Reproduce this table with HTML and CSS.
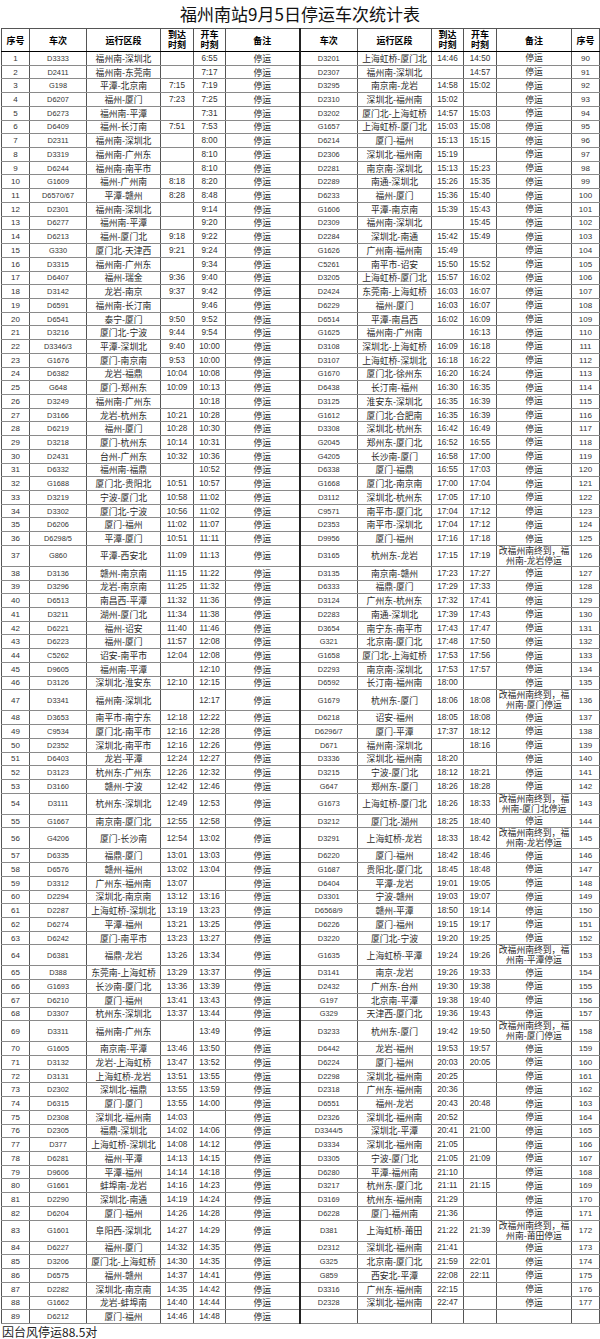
FILE: index.html
```html
<!DOCTYPE html>
<html lang="zh-CN">
<head>
<meta charset="utf-8">
<title>福州南站9月5日停运车次统计表</title>
<link rel="stylesheet" href="styles.css">
</head>
<body>
<div class="sheet">
<h1 class="title">福州南站9月5日停运车次统计表</h1>
<table class="grid">
<colgroup>
<col style="width:28px"><col style="width:57px"><col style="width:74px"><col style="width:33px"><col style="width:32px"><col style="width:74px">
<col style="width:58px"><col style="width:74px"><col style="width:32px"><col style="width:33px"><col style="width:75px"><col style="width:28px">
</colgroup>
<thead>
<tr class="head"><th>序号</th><th>车次</th><th>运行区段</th><th><span class="hl">到达</span><span class="hl">时刻</span></th><th><span class="hl">开车</span><span class="hl">时刻</span></th><th>备注</th><th>车次</th><th>运行区段</th><th><span class="hl">到达</span><span class="hl">时刻</span></th><th><span class="hl">开车</span><span class="hl">时刻</span></th><th>备注</th><th>序号</th></tr>
</thead>
<tbody>
<tr><td>1</td><td>D3333</td><td>福州南-深圳北</td><td></td><td>6:55</td><td>停运</td><td>D3201</td><td>上海虹桥-厦门北</td><td>14:46</td><td>14:50</td><td>停运</td><td>90</td></tr>
<tr><td>2</td><td>D2411</td><td>福州南-东莞南</td><td></td><td>7:17</td><td>停运</td><td>D2307</td><td>福州南-深圳北</td><td></td><td>14:57</td><td>停运</td><td>91</td></tr>
<tr><td>3</td><td>G198</td><td>平潭-北京南</td><td>7:15</td><td>7:19</td><td>停运</td><td>D3295</td><td>南京南-龙岩</td><td>14:58</td><td>15:02</td><td>停运</td><td>92</td></tr>
<tr><td>4</td><td>D6207</td><td>福州-厦门</td><td>7:23</td><td>7:25</td><td>停运</td><td>D2310</td><td>深圳北-福州南</td><td>15:02</td><td></td><td>停运</td><td>93</td></tr>
<tr><td>5</td><td>D6273</td><td>福州南-平潭</td><td></td><td>7:31</td><td>停运</td><td>D3202</td><td>厦门北-上海虹桥</td><td>14:57</td><td>15:03</td><td>停运</td><td>94</td></tr>
<tr><td>6</td><td>D6409</td><td>福州-长汀南</td><td>7:51</td><td>7:53</td><td>停运</td><td>G1657</td><td>上海虹桥-厦门北</td><td>15:03</td><td>15:08</td><td>停运</td><td>95</td></tr>
<tr><td>7</td><td>D2311</td><td>福州南-深圳北</td><td></td><td>8:00</td><td>停运</td><td>D6214</td><td>厦门-福州</td><td>15:13</td><td>15:15</td><td>停运</td><td>96</td></tr>
<tr><td>8</td><td>D3319</td><td>福州南-广州东</td><td></td><td>8:10</td><td>停运</td><td>D2306</td><td>深圳北-福州南</td><td>15:19</td><td></td><td>停运</td><td>97</td></tr>
<tr><td>9</td><td>D6244</td><td>福州南-南平市</td><td></td><td>8:10</td><td>停运</td><td>D2281</td><td>南京南-深圳北</td><td>15:13</td><td>15:23</td><td>停运</td><td>98</td></tr>
<tr><td>10</td><td>G1609</td><td>福州-广州南</td><td>8:18</td><td>8:20</td><td>停运</td><td>D2289</td><td>南通-深圳北</td><td>15:26</td><td>15:35</td><td>停运</td><td>99</td></tr>
<tr><td>11</td><td>D6570/67</td><td>平潭-赣州</td><td>8:28</td><td>8:48</td><td>停运</td><td>D6233</td><td>福州-厦门</td><td>15:36</td><td>15:40</td><td>停运</td><td>100</td></tr>
<tr><td>12</td><td>D2301</td><td>福州南-深圳北</td><td></td><td>9:14</td><td>停运</td><td>G1606</td><td>平潭-南京南</td><td>15:39</td><td>15:43</td><td>停运</td><td>101</td></tr>
<tr><td>13</td><td>D6277</td><td>福州南-平潭</td><td></td><td>9:20</td><td>停运</td><td>D2309</td><td>福州南-深圳北</td><td></td><td>15:45</td><td>停运</td><td>102</td></tr>
<tr><td>14</td><td>D6213</td><td>福州-厦门北</td><td>9:18</td><td>9:22</td><td>停运</td><td>D2284</td><td>深圳北-南通</td><td>15:42</td><td>15:49</td><td>停运</td><td>103</td></tr>
<tr><td>15</td><td>G330</td><td>厦门北-天津西</td><td>9:21</td><td>9:24</td><td>停运</td><td>G1626</td><td>广州南-福州南</td><td>15:49</td><td></td><td>停运</td><td>104</td></tr>
<tr><td>16</td><td>D3315</td><td>福州南-广州东</td><td></td><td>9:34</td><td>停运</td><td>C5261</td><td>南平市-诏安</td><td>15:50</td><td>15:52</td><td>停运</td><td>105</td></tr>
<tr><td>17</td><td>D6407</td><td>福州-瑞金</td><td>9:36</td><td>9:40</td><td>停运</td><td>D3205</td><td>上海虹桥-厦门北</td><td>15:57</td><td>16:02</td><td>停运</td><td>106</td></tr>
<tr><td>18</td><td>D3142</td><td>龙岩-南京</td><td>9:37</td><td>9:42</td><td>停运</td><td>D2424</td><td>东莞南-上海虹桥</td><td>16:03</td><td>16:07</td><td>停运</td><td>107</td></tr>
<tr><td>19</td><td>D6591</td><td>福州南-长汀南</td><td></td><td>9:46</td><td>停运</td><td>D6229</td><td>福州-厦门</td><td>16:03</td><td>16:07</td><td>停运</td><td>108</td></tr>
<tr><td>20</td><td>D6541</td><td>泰宁-厦门</td><td>9:50</td><td>9:52</td><td>停运</td><td>D6514</td><td>平潭-南昌西</td><td>16:02</td><td>16:09</td><td>停运</td><td>109</td></tr>
<tr><td>21</td><td>D3216</td><td>厦门北-宁波</td><td>9:44</td><td>9:54</td><td>停运</td><td>G1625</td><td>福州南-广州南</td><td></td><td>16:13</td><td>停运</td><td>110</td></tr>
<tr><td>22</td><td>D3346/3</td><td>平潭-深圳北</td><td>9:40</td><td>10:00</td><td>停运</td><td>D3108</td><td>深圳北-上海虹桥</td><td>16:09</td><td>16:18</td><td>停运</td><td>111</td></tr>
<tr><td>23</td><td>G1676</td><td>厦门-南京南</td><td>9:53</td><td>10:00</td><td>停运</td><td>D3107</td><td>上海虹桥-深圳北</td><td>16:18</td><td>16:22</td><td>停运</td><td>112</td></tr>
<tr><td>24</td><td>D6382</td><td>龙岩-福鼎</td><td>10:04</td><td>10:08</td><td>停运</td><td>G1670</td><td>厦门北-徐州东</td><td>16:20</td><td>16:24</td><td>停运</td><td>113</td></tr>
<tr><td>25</td><td>G648</td><td>厦门-郑州东</td><td>10:09</td><td>10:13</td><td>停运</td><td>D6438</td><td>长汀南-福州</td><td>16:30</td><td>16:35</td><td>停运</td><td>114</td></tr>
<tr><td>26</td><td>D3249</td><td>福州南-广州东</td><td></td><td>10:18</td><td>停运</td><td>D3125</td><td>淮安东-深圳北</td><td>16:35</td><td>16:39</td><td>停运</td><td>115</td></tr>
<tr><td>27</td><td>D3166</td><td>龙岩-杭州东</td><td>10:21</td><td>10:28</td><td>停运</td><td>G1612</td><td>厦门北-合肥南</td><td>16:35</td><td>16:39</td><td>停运</td><td>116</td></tr>
<tr><td>28</td><td>D6219</td><td>福州-厦门</td><td>10:28</td><td>10:30</td><td>停运</td><td>D3308</td><td>深圳北-杭州东</td><td>16:42</td><td>16:49</td><td>停运</td><td>117</td></tr>
<tr><td>29</td><td>D3218</td><td>厦门-杭州东</td><td>10:14</td><td>10:31</td><td>停运</td><td>G2045</td><td>郑州东-厦门北</td><td>16:52</td><td>16:55</td><td>停运</td><td>118</td></tr>
<tr><td>30</td><td>D2431</td><td>台州-广州东</td><td>10:32</td><td>10:36</td><td>停运</td><td>G4205</td><td>长沙南-厦门</td><td>16:58</td><td>17:00</td><td>停运</td><td>119</td></tr>
<tr><td>31</td><td>D6332</td><td>福州南-福鼎</td><td></td><td>10:52</td><td>停运</td><td>D6338</td><td>厦门-福鼎</td><td>16:55</td><td>17:03</td><td>停运</td><td>120</td></tr>
<tr><td>32</td><td>G1688</td><td>厦门北-贵阳北</td><td>10:51</td><td>10:57</td><td>停运</td><td>G1668</td><td>厦门北-南京南</td><td>17:00</td><td>17:04</td><td>停运</td><td>121</td></tr>
<tr><td>33</td><td>D3219</td><td>宁波-厦门北</td><td>10:58</td><td>11:02</td><td>停运</td><td>D3112</td><td>深圳北-杭州东</td><td>17:05</td><td>17:10</td><td>停运</td><td>122</td></tr>
<tr><td>34</td><td>D3302</td><td>厦门北-宁波</td><td>10:56</td><td>11:02</td><td>停运</td><td>C9571</td><td>南平市-厦门北</td><td>17:04</td><td>17:12</td><td>停运</td><td>123</td></tr>
<tr><td>35</td><td>D6206</td><td>厦门-福州</td><td>11:02</td><td>11:07</td><td>停运</td><td>D2353</td><td>南平市-深圳北</td><td>17:04</td><td>17:12</td><td>停运</td><td>124</td></tr>
<tr><td>36</td><td>D6298/5</td><td>平潭-厦门</td><td>10:51</td><td>11:11</td><td>停运</td><td>D9956</td><td>厦门-福州</td><td>17:16</td><td>17:18</td><td>停运</td><td>125</td></tr>
<tr class="tall"><td>37</td><td>G860</td><td>平潭-西安北</td><td>11:09</td><td>11:13</td><td>停运</td><td>D3165</td><td>杭州东-龙岩</td><td>17:15</td><td>17:19</td><td>改福州南终到，福州南-龙岩停运</td><td>126</td></tr>
<tr><td>38</td><td>D3136</td><td>赣州-南京南</td><td>11:15</td><td>11:22</td><td>停运</td><td>D3135</td><td>南京南-赣州</td><td>17:23</td><td>17:27</td><td>停运</td><td>127</td></tr>
<tr><td>39</td><td>D3296</td><td>龙岩-南京南</td><td>11:25</td><td>11:32</td><td>停运</td><td>D6333</td><td>福鼎-厦门</td><td>17:29</td><td>17:33</td><td>停运</td><td>128</td></tr>
<tr><td>40</td><td>D6513</td><td>南昌西-平潭</td><td>11:32</td><td>11:36</td><td>停运</td><td>D3124</td><td>广州东-杭州东</td><td>17:32</td><td>17:41</td><td>停运</td><td>129</td></tr>
<tr><td>41</td><td>D3211</td><td>湖州-厦门北</td><td>11:34</td><td>11:38</td><td>停运</td><td>D2283</td><td>南通-深圳北</td><td>17:39</td><td>17:43</td><td>停运</td><td>130</td></tr>
<tr><td>42</td><td>D6221</td><td>福州-诏安</td><td>11:40</td><td>11:46</td><td>停运</td><td>D3654</td><td>南宁东-南平市</td><td>17:43</td><td>17:47</td><td>停运</td><td>131</td></tr>
<tr><td>43</td><td>D6223</td><td>福州-厦门</td><td>11:57</td><td>12:08</td><td>停运</td><td>G321</td><td>北京南-厦门北</td><td>17:48</td><td>17:50</td><td>停运</td><td>132</td></tr>
<tr><td>44</td><td>C5262</td><td>诏安-南平市</td><td>12:04</td><td>12:08</td><td>停运</td><td>G1658</td><td>厦门北-上海虹桥</td><td>17:53</td><td>17:56</td><td>停运</td><td>133</td></tr>
<tr><td>45</td><td>D9605</td><td>福州南-平潭</td><td></td><td>12:10</td><td>停运</td><td>D2293</td><td>南京南-深圳北</td><td>17:53</td><td>17:57</td><td>停运</td><td>134</td></tr>
<tr><td>46</td><td>D3126</td><td>深圳北-淮安东</td><td>12:10</td><td>12:15</td><td>停运</td><td>D6592</td><td>长汀南-福州南</td><td>18:00</td><td></td><td>停运</td><td>135</td></tr>
<tr class="tall"><td>47</td><td>D3341</td><td>福州南-深圳北</td><td></td><td>12:17</td><td>停运</td><td>G1679</td><td>杭州东-厦门</td><td>18:06</td><td>18:08</td><td>改福州南终到，福州南-厦门停运</td><td>136</td></tr>
<tr><td>48</td><td>D3653</td><td>南平市-南宁东</td><td>12:18</td><td>12:22</td><td>停运</td><td>D6218</td><td>诏安-福州</td><td>18:05</td><td>18:08</td><td>停运</td><td>137</td></tr>
<tr><td>49</td><td>C9534</td><td>厦门北-南平市</td><td>12:16</td><td>12:28</td><td>停运</td><td>D6296/7</td><td>厦门-平潭</td><td>17:37</td><td>18:12</td><td>停运</td><td>138</td></tr>
<tr><td>50</td><td>D2352</td><td>深圳北-南平市</td><td>12:16</td><td>12:26</td><td>停运</td><td>D671</td><td>福州南-深圳北</td><td></td><td>18:16</td><td>停运</td><td>139</td></tr>
<tr><td>51</td><td>D6403</td><td>龙岩-平潭</td><td>12:24</td><td>12:27</td><td>停运</td><td>D3336</td><td>深圳北-福州南</td><td>18:20</td><td></td><td>停运</td><td>140</td></tr>
<tr><td>52</td><td>D3123</td><td>杭州东-广州东</td><td>12:26</td><td>12:32</td><td>停运</td><td>D3215</td><td>宁波-厦门北</td><td>18:12</td><td>18:21</td><td>停运</td><td>141</td></tr>
<tr><td>53</td><td>D3160</td><td>赣州-宁波</td><td>12:42</td><td>12:46</td><td>停运</td><td>G647</td><td>郑州东-厦门</td><td>18:26</td><td>18:28</td><td>停运</td><td>142</td></tr>
<tr class="tall"><td>54</td><td>D3111</td><td>杭州东-深圳北</td><td>12:49</td><td>12:53</td><td>停运</td><td>G1673</td><td>上海虹桥-厦门北</td><td>18:26</td><td>18:33</td><td>改福州南终到，福州南-厦门北停运</td><td>143</td></tr>
<tr><td>55</td><td>G1667</td><td>南京南-厦门北</td><td>12:55</td><td>12:58</td><td>停运</td><td>D3212</td><td>厦门北-湖州</td><td>18:25</td><td>18:40</td><td>停运</td><td>144</td></tr>
<tr class="tall"><td>56</td><td>G4206</td><td>厦门-长沙南</td><td>12:54</td><td>13:02</td><td>停运</td><td>D3291</td><td>上海虹桥-龙岩</td><td>18:33</td><td>18:42</td><td>改福州南终到，福州南-龙岩停运</td><td>145</td></tr>
<tr><td>57</td><td>D6335</td><td>福鼎-厦门</td><td>13:01</td><td>13:03</td><td>停运</td><td>D6220</td><td>厦门-福州</td><td>18:42</td><td>18:46</td><td>停运</td><td>146</td></tr>
<tr><td>58</td><td>D6576</td><td>赣州-福州</td><td>13:02</td><td>13:04</td><td>停运</td><td>G1687</td><td>贵阳北-厦门北</td><td>18:45</td><td>18:48</td><td>停运</td><td>147</td></tr>
<tr><td>59</td><td>D3312</td><td>广州东-福州南</td><td>13:07</td><td></td><td>停运</td><td>D6404</td><td>平潭-龙岩</td><td>19:01</td><td>19:05</td><td>停运</td><td>148</td></tr>
<tr><td>60</td><td>D2294</td><td>深圳北-南京南</td><td>13:12</td><td>13:16</td><td>停运</td><td>D3301</td><td>宁波-赣州</td><td>19:03</td><td>19:07</td><td>停运</td><td>149</td></tr>
<tr><td>61</td><td>D2287</td><td>上海虹桥-深圳北</td><td>13:19</td><td>13:23</td><td>停运</td><td>D6568/9</td><td>赣州-平潭</td><td>18:50</td><td>19:14</td><td>停运</td><td>150</td></tr>
<tr><td>62</td><td>D6274</td><td>平潭-福州</td><td>13:21</td><td>13:25</td><td>停运</td><td>D6226</td><td>厦门-福州</td><td>19:15</td><td>19:17</td><td>停运</td><td>151</td></tr>
<tr><td>63</td><td>D6242</td><td>厦门-南平市</td><td>13:23</td><td>13:27</td><td>停运</td><td>D3220</td><td>厦门北-宁波</td><td>19:20</td><td>19:25</td><td>停运</td><td>152</td></tr>
<tr class="tall"><td>64</td><td>D6381</td><td>福鼎-龙岩</td><td>13:26</td><td>13:34</td><td>停运</td><td>G1635</td><td>上海虹桥-平潭</td><td>19:24</td><td>19:26</td><td>改福州南终到，福州南-平潭停运</td><td>153</td></tr>
<tr><td>65</td><td>D388</td><td>东莞南-上海虹桥</td><td>13:29</td><td>13:37</td><td>停运</td><td>D3141</td><td>南京-龙岩</td><td>19:26</td><td>19:33</td><td>停运</td><td>154</td></tr>
<tr><td>66</td><td>G1693</td><td>长沙南-厦门北</td><td>13:36</td><td>13:39</td><td>停运</td><td>D2432</td><td>广州东-台州</td><td>19:30</td><td>19:38</td><td>停运</td><td>155</td></tr>
<tr><td>67</td><td>D6210</td><td>厦门-福州</td><td>13:41</td><td>13:43</td><td>停运</td><td>G197</td><td>北京南-平潭</td><td>19:38</td><td>19:40</td><td>停运</td><td>156</td></tr>
<tr><td>68</td><td>D3307</td><td>杭州东-深圳北</td><td>13:37</td><td>13:44</td><td>停运</td><td>G329</td><td>天津西-厦门北</td><td>19:36</td><td>19:43</td><td>停运</td><td>157</td></tr>
<tr class="tall"><td>69</td><td>D3311</td><td>福州南-广州东</td><td></td><td>13:49</td><td>停运</td><td>D3233</td><td>杭州东-厦门</td><td>19:42</td><td>19:50</td><td>改福州南终到，福州南-厦门停运</td><td>158</td></tr>
<tr><td>70</td><td>G1605</td><td>南京南-平潭</td><td>13:46</td><td>13:50</td><td>停运</td><td>D6442</td><td>龙岩-福州</td><td>19:53</td><td>19:57</td><td>停运</td><td>159</td></tr>
<tr><td>71</td><td>D3132</td><td>龙岩-上海虹桥</td><td>13:47</td><td>13:52</td><td>停运</td><td>D6224</td><td>厦门-福州</td><td>20:03</td><td>20:05</td><td>停运</td><td>160</td></tr>
<tr><td>72</td><td>D3131</td><td>上海虹桥-龙岩</td><td>13:51</td><td>13:55</td><td>停运</td><td>D2298</td><td>深圳北-福州南</td><td>20:25</td><td></td><td>停运</td><td>161</td></tr>
<tr><td>73</td><td>D2302</td><td>深圳北-福鼎</td><td>13:55</td><td>13:59</td><td>停运</td><td>D2318</td><td>广州东-福州南</td><td>20:36</td><td></td><td>停运</td><td>162</td></tr>
<tr><td>74</td><td>D6315</td><td>厦门-厦门</td><td>13:55</td><td>14:00</td><td>停运</td><td>D6551</td><td>福州-龙岩</td><td>20:43</td><td>20:48</td><td>停运</td><td>163</td></tr>
<tr><td>75</td><td>D2308</td><td>深圳北-福州南</td><td>14:03</td><td></td><td>停运</td><td>D2326</td><td>深圳北-福州南</td><td>20:52</td><td></td><td>停运</td><td>164</td></tr>
<tr><td>76</td><td>D2305</td><td>福鼎-深圳北</td><td>14:02</td><td>14:06</td><td>停运</td><td>D3344/5</td><td>深圳北-平潭</td><td>20:41</td><td>21:00</td><td>停运</td><td>165</td></tr>
<tr><td>77</td><td>D377</td><td>上海虹桥-深圳北</td><td>14:08</td><td>14:12</td><td>停运</td><td>D3334</td><td>深圳北-福州南</td><td>21:05</td><td></td><td>停运</td><td>166</td></tr>
<tr><td>78</td><td>D6281</td><td>福州-平潭</td><td>14:13</td><td>14:15</td><td>停运</td><td>D3305</td><td>宁波-厦门北</td><td>21:05</td><td>21:09</td><td>停运</td><td>167</td></tr>
<tr><td>79</td><td>D9606</td><td>平潭-福州</td><td>14:14</td><td>14:18</td><td>停运</td><td>D6280</td><td>平潭-福州南</td><td>21:10</td><td></td><td>停运</td><td>168</td></tr>
<tr><td>80</td><td>G1661</td><td>蚌埠南-龙岩</td><td>14:16</td><td>14:23</td><td>停运</td><td>D3217</td><td>杭州东-厦门北</td><td>21:11</td><td>21:15</td><td>停运</td><td>169</td></tr>
<tr><td>81</td><td>D2290</td><td>深圳北-南通</td><td>14:19</td><td>14:24</td><td>停运</td><td>D3169</td><td>杭州东-福州南</td><td>21:29</td><td></td><td>停运</td><td>170</td></tr>
<tr><td>82</td><td>D6204</td><td>厦门-福州</td><td>14:26</td><td>14:28</td><td>停运</td><td>D6228</td><td>厦门-福州南</td><td>21:36</td><td></td><td>停运</td><td>171</td></tr>
<tr class="tall"><td>83</td><td>G1601</td><td>阜阳西-深圳北</td><td>14:27</td><td>14:29</td><td>停运</td><td>D381</td><td>上海虹桥-莆田</td><td>21:22</td><td>21:39</td><td>改福州南终到，福州南-莆田停运</td><td>172</td></tr>
<tr><td>84</td><td>D6227</td><td>福州-厦门</td><td>14:32</td><td>14:35</td><td>停运</td><td>D2312</td><td>深圳北-福州南</td><td>21:41</td><td></td><td>停运</td><td>173</td></tr>
<tr><td>85</td><td>D3206</td><td>厦门北-上海虹桥</td><td>14:30</td><td>14:35</td><td>停运</td><td>G325</td><td>北京南-厦门北</td><td>21:59</td><td>22:01</td><td>停运</td><td>174</td></tr>
<tr><td>86</td><td>D6575</td><td>福州-赣州</td><td>14:37</td><td>14:41</td><td>停运</td><td>G859</td><td>西安北-平潭</td><td>22:08</td><td>22:11</td><td>停运</td><td>175</td></tr>
<tr><td>87</td><td>D2282</td><td>深圳北-南京南</td><td>14:35</td><td>14:42</td><td>停运</td><td>D3316</td><td>广州东-福州南</td><td>22:15</td><td></td><td>停运</td><td>176</td></tr>
<tr><td>88</td><td>G1662</td><td>龙岩-蚌埠南</td><td>14:40</td><td>14:44</td><td>停运</td><td>D2328</td><td>深圳北-福州南</td><td>22:47</td><td></td><td>停运</td><td>177</td></tr>
<tr><td>89</td><td>D6212</td><td>厦门-福州</td><td>14:46</td><td>14:48</td><td>停运</td><td></td><td></td><td></td><td></td><td></td><td></td></tr>
</tbody>
</table>
<p class="note">因台风停运88.5对</p>
</div>
</body>
</html>
```
FILE: styles.css
```css
html, body {
  margin: 0;
  padding: 0;
  background: #ffffff;
}

.sheet {
  width: 600px;
  font-family: "Noto Sans CJK SC", "Noto Sans", sans-serif;
  color: #1a1a1a;
}

.title {
  margin: 0;
  height: 28px;
  box-sizing: border-box;
  padding-top: 3px;
  font-size: 17px;
  line-height: 22px;
  font-weight: 400;
  text-align: center;
  color: #111;
}

.grid {
  width: 598px;
  margin-left: 1px;
  border-collapse: collapse;
  table-layout: fixed;
  border: 1px solid #000;
}

.grid th,
.grid td {
  padding: 0;
  text-align: center;
  vertical-align: middle;
  overflow: hidden;
  white-space: nowrap;
  border: 1px solid #555;
}

.grid td {
  border-top-color: #8a8a8a;
  border-bottom-color: #8a8a8a;
}

.grid th:nth-child(6),
.grid td:nth-child(6) {
  border-right: 2px solid #222;
}

.head {
  height: 23px;
}

.grid th {
  font-size: 9px;
  line-height: 11px;
  font-weight: 700;
  color: #000;
  border-bottom-color: #000;
}

.hl {
  display: block;
  height: 10px;
  line-height: 10px;
}

.grid tbody tr {
  height: 13.72px;
}

.grid tbody tr.tall {
  height: 21px;
}

.grid td {
  font-size: 8.8px;
  line-height: 11px;
  color: #2a2a2a;
}

/* serial numbers */
.grid td:nth-child(1),
.grid td:nth-child(12) {
  font-family: "Liberation Sans", sans-serif;
  font-size: 8px;
  color: #333;
}

/* train codes */
.grid td:nth-child(2),
.grid td:nth-child(7) {
  font-family: "Liberation Sans", sans-serif;
  font-size: 7.4px;
  color: #333;
}

/* times */
.grid td:nth-child(4),
.grid td:nth-child(5),
.grid td:nth-child(9),
.grid td:nth-child(10) {
  font-family: "Liberation Sans", sans-serif;
  font-size: 8.2px;
  color: #333;
}

/* remarks */
.grid td:nth-child(11) {
  white-space: normal;
  line-height: 10px;
}

.note {
  margin: 0;
  height: 16px;
  padding-left: 2px;
  font-size: 12px;
  line-height: 16px;
  color: #222;
}
```
